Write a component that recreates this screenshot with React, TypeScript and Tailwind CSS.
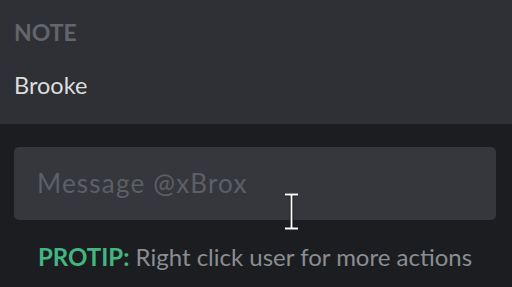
export default function App() {
  return (
    <div className="w-[512px] h-[287px] overflow-hidden bg-[#1c1d20] font-['Lato','Open_Sans',sans-serif] flex flex-col">
      {/* Note section */}
      <div className="h-[124px] bg-[#2f3035] px-[14px] pt-[19px]">
        <div className="text-[23px] leading-[26px] font-bold uppercase text-[#62656b]">Note</div>
        <div className="mt-[26px] text-[23.5px] leading-[28px] text-[#dcddde]">Brooke</div>
      </div>
      {/* Message area */}
      <div className="relative flex-1 pl-[14px] pr-[16px] pt-[23px]">
        <div className="h-[73px] rounded-[5px] bg-[#35373c] flex items-center px-[23px]">
          <span className="text-[26px] tracking-[1.2px] text-[#5c5f65]">Message @xBrox</span>
        </div>
        <div className="mt-[23px] pl-[24px] text-[24px] leading-[28px] text-[#8a8d92]">
          <span className="font-bold text-[#43b581]">PROTIP:</span> Right click user for more actions
        </div>
        {/* I-beam cursor */}
        <svg className="absolute left-[283px] top-[69px]" width="17" height="37" viewBox="0 0 17 37">
          <path d="M2 1.5h13M2 35.5h13M8.5 1.5v34" stroke="#111" strokeWidth="3.5" fill="none" />
          <path d="M2 1.5h13M2 35.5h13M8.5 1.5v34" stroke="#fff" strokeWidth="1.8" fill="none" />
        </svg>
      </div>
    </div>
  );
}
